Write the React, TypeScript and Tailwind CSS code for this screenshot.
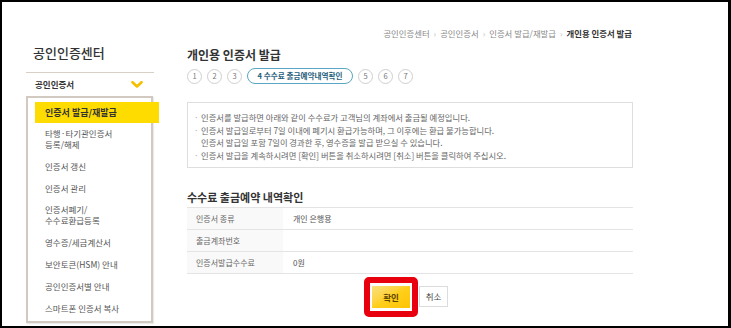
import React from "react";

const font = { fontFamily: '"Noto Sans CJK KR", "Noto Sans", sans-serif' };

function Chevron() {
  return (
    <svg width="12" height="7" viewBox="0 0 12 7">
      <path d="M1.5 1.2 L6 5.5 L10.5 1.2" fill="none" stroke="#f5c000" strokeWidth="2.6" strokeLinecap="round" strokeLinejoin="round" />
    </svg>
  );
}

const items: { t: string[]; active?: boolean }[] = [
  { t: ["타행·타기관인증서", "등록/해제"] },
  { t: ["인증서 갱신"] },
  { t: ["인증서 관리"] },
  { t: ["인증서폐기/", "수수료환급등록"] },
  { t: ["영수증/세금계산서"] },
  { t: ["보안토큰(HSM) 안내"] },
  { t: ["공인인증서별 안내"] },
  { t: ["스마트폰 인증서 복사"] },
];

function Sidebar() {
  return (
    <div className="ml-[24px] w-[128px] shrink-0 pt-[43px]">
      <div className="h-[16px] leading-[16px] text-[13px] font-medium text-[#333] pl-[7px]">공인인증센터</div>
      <div className="mt-[11px] border-t border-[#d8d0c7]" />
      <div className="h-[23px] flex items-center justify-between pl-[9px] pr-[11px]">
        <span className="text-[8.5px] font-bold text-[#333]">공인인증서</span>
        <Chevron />
      </div>
      <div className="w-[127px] h-[227px] border-2 border-[#d2cac0] shadow-[1px_1px_1px_rgba(0,0,0,0.08)]">
        <div className="mt-[4px] ml-[7px] w-[124px] h-[21px] bg-[#ffdc00] flex items-center pl-[10px] text-[9px] font-bold text-[#333]">
          인증서 발급/재발급
        </div>
        {items.map((it, i) => (
          <div
            key={i}
            className={`${it.t.length > 1 ? "h-[32px]" : "h-[22px]"} flex flex-col justify-center pl-[17px] text-[8.5px] leading-[11px] text-[#555]`}
          >
            {it.t.map((l, j) => (
              <div key={j}>{l}</div>
            ))}
          </div>
        ))}
      </div>
    </div>
  );
}

function Steps() {
  const c = (n: string) => (
    <div key={n} className="w-[15px] h-[15px] rounded-full border border-[#cfcfcf] flex items-center justify-center text-[7.5px] text-[#777]">
      {n}
    </div>
  );
  return (
    <div className="mt-[5px] h-[16px] flex items-center gap-[5px]">
      {c("1")}
      {c("2")}
      {c("3")}
      <div className="w-[106px] h-[16px] rounded-full border-[1.5px] border-[#5aa6c4] flex items-center justify-center text-[7.6px] font-bold text-[#1f5e7c]">
        4 수수료 출금예약내역확인
      </div>
      {c("5")}
      {c("6")}
      {c("7")}
    </div>
  );
}

function Bullet({ lines }: { lines: string[] }) {
  return (
    <div className="flex mb-[1px]">
      <span className="w-[7px] text-[#aaa]">·</span>
      <div>
        {lines.map((l, i) => (
          <div key={i}>{l}</div>
        ))}
      </div>
    </div>
  );
}

function Row({ label, value }: { label: string; value: string }) {
  return (
    <div className="h-[22px] flex border-b border-[#e4e4e4] text-[8px] text-[#666]">
      <div className="w-[96px] bg-[#f9f9f9] flex items-center pl-[9px]">{label}</div>
      <div className="flex items-center pl-[10px] text-[#555]">{value}</div>
    </div>
  );
}

export default function App() {
  return (
    <div style={font} className="w-[731px] h-[328px] bg-white border-t-2 border-l-2 border-r-[3px] border-b-2 border-black flex overflow-hidden">
      <Sidebar />
      <div className="ml-[33px] w-[446px] shrink-0 pt-[26px]">
        <div className="h-[10px] flex items-center justify-end text-[8.4px] leading-[10px] text-[#888] pr-px">
          <span>공인인증센터</span>
          <span className="mx-[4px] text-[#bbb]">›</span>
          <span>공인인증서</span>
          <span className="mx-[4px] text-[#bbb]">›</span>
          <span>인증서 발급/재발급</span>
          <span className="mx-[4px] text-[#bbb]">›</span>
          <span className="font-bold text-[#333]">개인용 인증서 발급</span>
        </div>
        <div className="mt-[9px] h-[16px] leading-[16px] text-[12px] font-bold text-[#333]">개인용 인증서 발급</div>
        <Steps />
        <div className="mt-[18px] h-[66px] border border-[#dedede] pt-[8px] pl-[6px] text-[8.3px] leading-[12px] text-[#666]">
          <Bullet lines={["인증서를 발급하면 아래와 같이 수수료가 고객님의 계좌에서 출금될 예정입니다."]} />
          <Bullet
            lines={[
              "인증서 발급일로부터 7일 이내에 폐기시 환급가능하며, 그 이후에는 환급 불가능합니다.",
              "인증서 발급일 포함 7일이 경과한 후, 영수증을 발급 받으실 수 있습니다.",
            ]}
          />
          <Bullet lines={["인증서 발급을 계속하시려면 [확인] 버튼을 취소하시려면 [취소] 버튼을 클릭하여 주십시오."]} />
        </div>
        <div className="mt-[22px] h-[14px] leading-[14px] text-[11px] font-bold text-[#333]">수수료 출금예약 내역확인</div>
        <div className="mt-[3px] border-t border-[#e4e4e4]">
          <Row label="인증서 종류" value="개인 은행용" />
          <Row label="출금계좌번호" value="" />
          <Row label="인증서발급수수료" value="0원" />
        </div>
        <div className="mt-[12px] flex justify-center gap-[9px]">
          <div className="relative">
            <div className="w-[38px] h-[22px] bg-gradient-to-br from-[#f8e07a] via-[#ffcf1a] to-[#ffc400] flex items-center justify-center text-[8.5px] font-bold text-[#5b4300]">
              확인
            </div>
            <div className="absolute left-[-8px] top-[-9px] w-[54px] h-[40px] border-[6px] border-[#e8000f] rounded-[5px]" />
          </div>
          <div className="w-[29px] h-[21px] bg-white border border-[#dcdcdc] flex items-center justify-center text-[8.5px] text-[#444]">
            취소
          </div>
        </div>
      </div>
    </div>
  );
}
